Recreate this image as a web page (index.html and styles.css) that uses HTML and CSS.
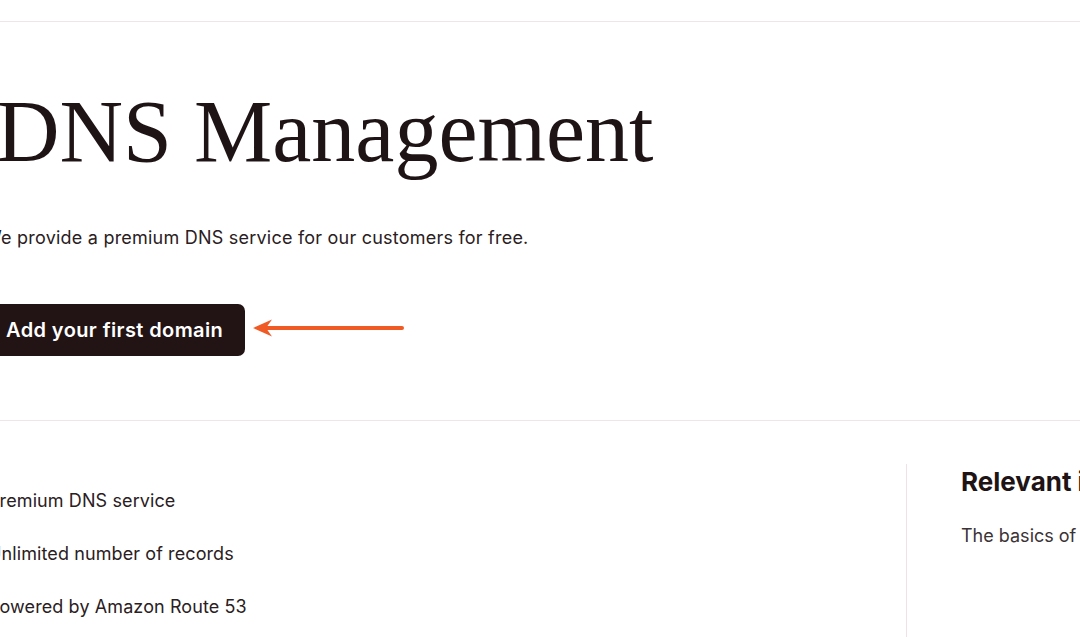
FILE: index.html
```html
<!DOCTYPE html>
<html lang="en">

<head>
    <meta charset="UTF-8">
    <meta name="viewport" content="width=device-width, initial-scale=1.0">
    <title>DNS Management</title>
    <link rel="stylesheet" href="styles.css">
</head>

<body>
    <div class="topbar"></div>

    <div class="page">
        <section class="hero">
            <h1>DNS Management</h1>
            <p class="lead">We provide a premium DNS service for our customers for free.</p>
            <div class="cta-row">
                <button class="btn-primary">Add your first domain</button>
                <svg class="pointer" width="154" height="22" viewBox="0 0 154 22">
                    <line x1="10" y1="11" x2="150" y2="11" stroke="#f05a24" stroke-width="4" stroke-linecap="round" />
                    <path d="M1 11 L20 2.5 L14 11 L20 19.5 Z" fill="#f05a24" />
                </svg>
            </div>
        </section>
    </div>

    <div class="divider"></div>

    <div class="page">
        <section class="details">
            <ul class="features">
                <li>Premium DNS service</li>
                <li>Unlimited number of records</li>
                <li>Powered by Amazon Route 53</li>
            </ul>
            <aside class="resources">
                <h3>Relevant information</h3>
                <p>The basics of DNS management</p>
            </aside>
        </section>
    </div>
</body>

</html>
```

FILE: styles.css
```css
body {
    margin: 0;
    font-family: Inter, "Noto Sans", sans-serif;
    color: #1f1416;
    background-color: white;
    overflow: hidden;
}

.topbar {
    height: 21px;
    border-bottom: 1px solid #efe4e7;
}

.divider {
    border-top: 1px solid #efe4e7;
}

.page {
    margin-left: -16px;
    width: 1300px;
}

.hero {
    padding-top: 57px;
    padding-bottom: 64px;
}

h1 {
    margin: 0 0 0 12px;
    font-family: "Liberation Serif", serif;
    font-weight: 400;
    font-size: 88px;
    line-height: 1.2;
    color: #1e1315;
}

.lead {
    margin: 39px 0 0 0;
    font-size: 18px;
    letter-spacing: 0.22px;
    line-height: 27px;
    color: #2a2022;
}

.cta-row {
    display: flex;
    align-items: center;
    gap: 7px;
    margin-top: 53px;
}

.btn-primary {
    height: 52px;
    padding: 0 22px;
    background-color: #221315;
    color: white;
    border: none;
    border-radius: 7px;
    font-family: Inter, sans-serif;
    font-size: 20px;
    letter-spacing: 0.4px;
    font-weight: 600;
    cursor: pointer;
}

.pointer {
    display: block;
    margin-top: -4px;
}

.details {
    display: grid;
    grid-template-columns: 922px 1fr;
    padding-top: 43px;
}

.features {
    list-style: none;
    margin: 0;
    padding: 23px 0 0 4px;
    display: flex;
    flex-direction: column;
    gap: 26px;
}

.features li {
    font-size: 18px;
    letter-spacing: 0.1px;
    line-height: 27px;
    color: #2a2022;
}

.resources {
    border-left: 1px solid #efe1e6;
    padding: 2px 0 120px 54px;
}

.resources h3 {
    margin: 0;
    font-size: 26px;
    line-height: 31px;
    font-weight: 700;
    color: #1e1315;
}

.resources p {
    margin: 25px 0 0 0;
    font-size: 18px;
    line-height: 27px;
    color: #3b3335;
}
```
